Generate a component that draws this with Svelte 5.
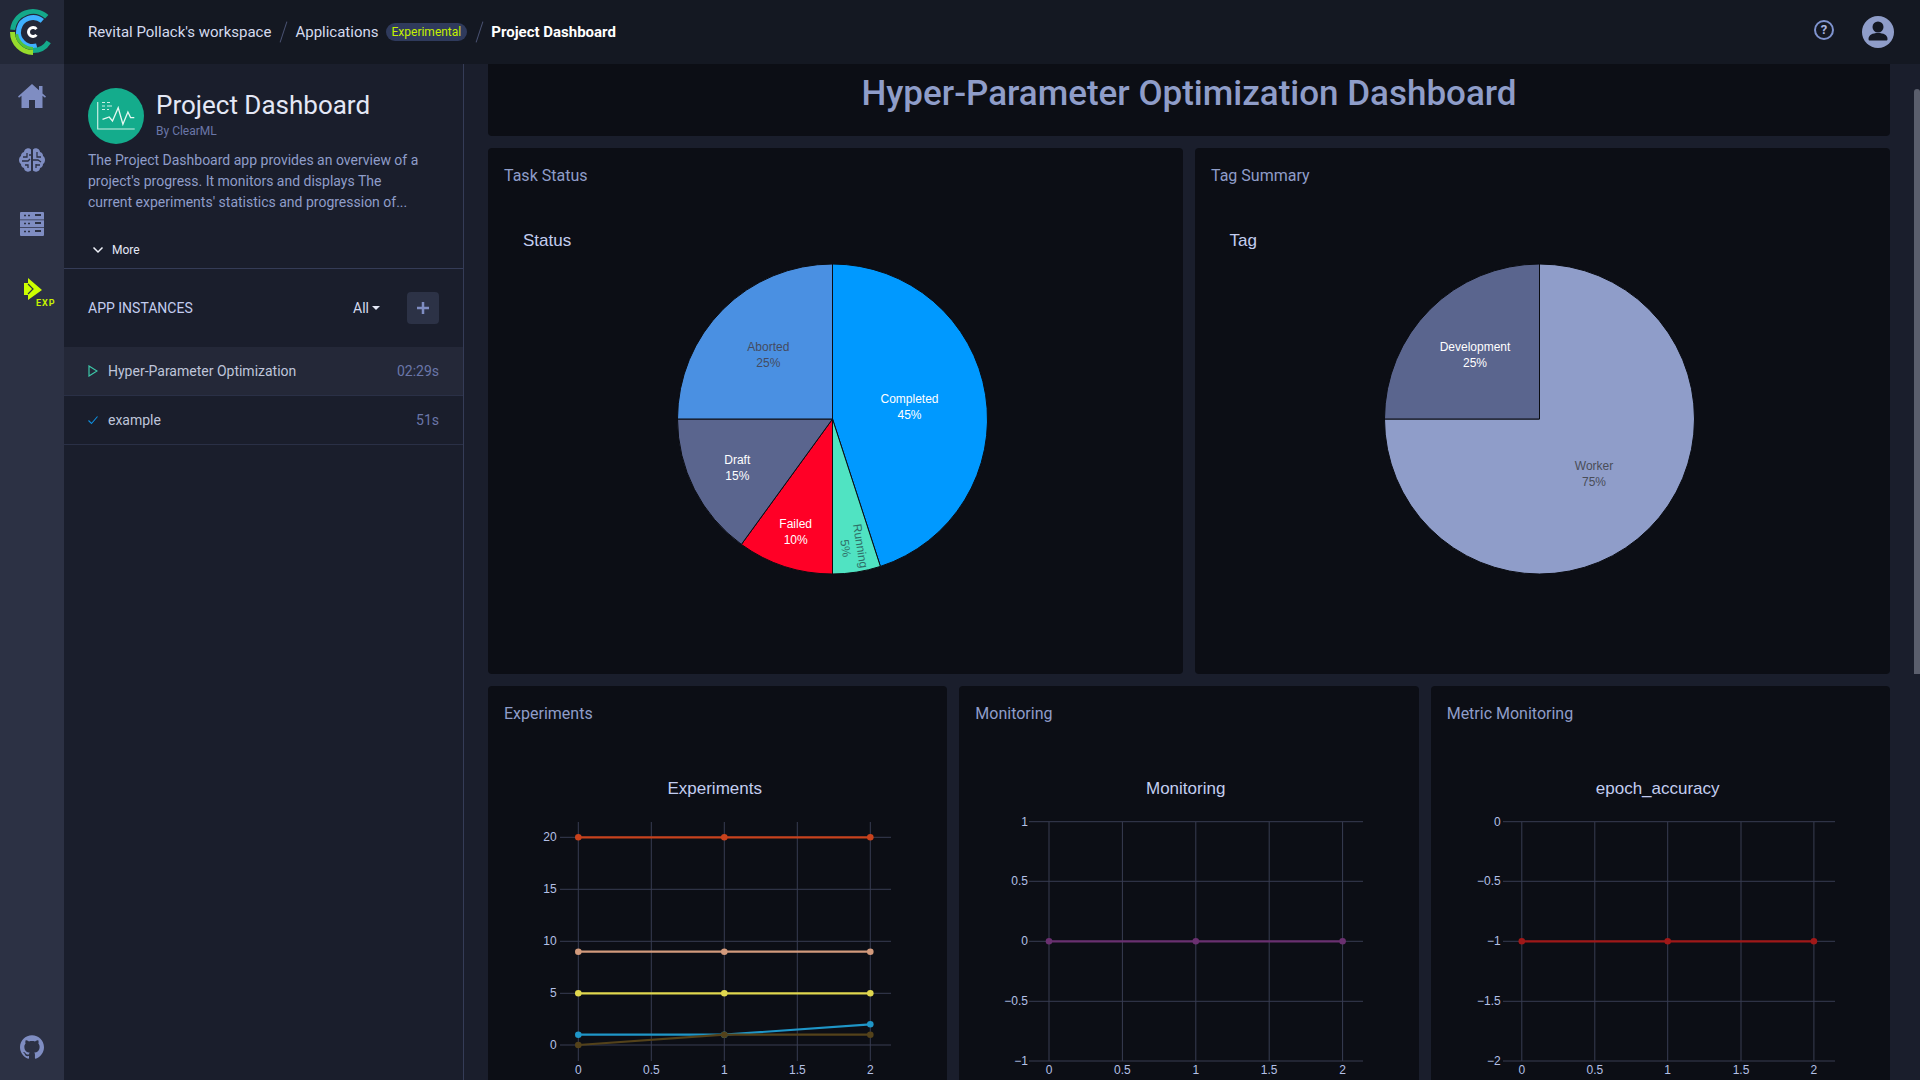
<script>
	// polar helpers, 0deg = 12 o'clock, clockwise
	function pt(cx, cy, r, a) {
		const t = (a * Math.PI) / 180;
		return [cx + r * Math.sin(t), cy - r * Math.cos(t)];
	}
	function arc(cx, cy, r, a0, a1) {
		const [x0, y0] = pt(cx, cy, r, a0);
		const [x1, y1] = pt(cx, cy, r, a1);
		return `M${x0} ${y0}A${r} ${r} 0 ${a1 - a0 > 180 ? 1 : 0} 1 ${x1} ${y1}`;
	}
	function wedge(cx, cy, r, a0, a1) {
		return `M${cx} ${cy}L${arc(cx, cy, r, a0, a1).slice(1)}Z`;
	}

	const cards = [
		{
			title: 'Task Status',
			chart: 'Status',
			chartX: 35,
			cx: 344.5,
			slices: [
				{ from: 0, to: 162, color: '#0099ff' },
				{ from: 162, to: 180, color: '#50e3c2' },
				{ from: 180, to: 216, color: '#ff0026' },
				{ from: 216, to: 270, color: '#5a658e' },
				{ from: 270, to: 360, color: '#4a90e2' }
			],
			labels: [
				{ x: 421.5, y: 201, name: 'Completed', pct: '45%', color: '#fff' },
				{ x: 280.3, y: 149, name: 'Aborted', pct: '25%', color: '#444b60' },
				{ x: 249.3, y: 261.5, name: 'Draft', pct: '15%', color: '#fff' },
				{ x: 307.7, y: 326, name: 'Failed', pct: '10%', color: '#fff' }
			],
			rotated: true
		},
		{
			title: 'Tag Summary',
			chart: 'Tag',
			chartX: 34.5,
			cx: 344.5,
			slices: [
				{ from: 0, to: 270, color: '#8f9dc9' },
				{ from: 270, to: 360, color: '#5a658e' }
			],
			labels: [
				{ x: 280, y: 149, name: 'Development', pct: '25%', color: '#fff' },
				{ x: 399, y: 268, name: 'Worker', pct: '75%', color: '#4a4d58' }
			],
			rotated: false
		}
	];

	const plots = [
		{
			title: 'Experiments',
			chart: 'Experiments',
			xs: [90.3, 163.3, 236.3, 309.3, 382.3],
			hFrom: 72,
			hTo: 403,
			labelEnd: 68.7,
			ticks: [
				['20', 97.3],
				['15', 149.3],
				['10', 201.3],
				['5', 253.3],
				['0', 305]
			],
			series: [
				{ color: '#c8421c', ys: [97.3, 97.3, 97.3] },
				{ color: '#d29a7c', ys: [211.7, 211.7, 211.7] },
				{ color: '#e0d74e', ys: [253.3, 253.3, 253.3] },
				{ color: '#1f96c8', ys: [294.7, 294.7, 284.3] },
				{ color: '#54421a', ys: [305, 294.7, 294.7] }
			]
		},
		{
			title: 'Monitoring',
			chart: 'Monitoring',
			xs: [90, 163.4, 236.8, 310.2, 383.6],
			hFrom: 70,
			hTo: 404,
			labelEnd: 69,
			ticks: [
				['1', 81.7],
				['0.5', 141.3],
				['0', 201.3],
				['−0.5', 261.3],
				['−1', 321]
			],
			series: [{ color: '#6a3070', ys: [201.3, 201.3, 201.3] }]
		},
		{
			title: 'Metric Monitoring',
			chart: 'epoch_accuracy',
			xs: [90.8, 163.8, 236.7, 310, 382.9],
			hFrom: 72,
			hTo: 404,
			labelEnd: 69.7,
			ticks: [
				['0', 81.7],
				['−0.5', 141.3],
				['−1', 201.3],
				['−1.5', 261.3],
				['−2', 321]
			],
			series: [{ color: '#a01818', ys: [201.3, 201.3, 201.3] }]
		}
	];
	const xLabels = ['0', '0.5', '1', '1.5', '2'];
</script>

<div class="app">
	<div class="logo">
		<svg width="64" height="64" viewBox="0 0 64 64" fill="none">
			<path d={arc(33, 32, 20.5, -84, 42)} stroke="#14a98a" stroke-width="5" />
			<path d={arc(33, 32, 14.5, 165, 400)} stroke="#3fb1ff" stroke-width="5" />
			<path d={arc(33, 32, 20.5, 180, 270)} stroke="#97dc2c" stroke-width="5" />
			<path d={arc(33, 32, 16.5, 180, 262)} stroke="#4fc23c" stroke-width="3" />
			<path d={arc(33, 32, 18.5, 122, 180)} stroke="#14a98a" stroke-width="5" />
			<path d={arc(33, 32, 4.5, 130, 410)} stroke="#fff" stroke-width="3" />
		</svg>
	</div>

	<header class="topbar">
		<nav class="crumbs">
			<span>Revital Pollack's workspace</span>
			<i class="slash"></i>
			<span>Applications</span>
			<span class="badge">Experimental</span>
			<i class="slash"></i>
			<span class="current">Project Dashboard</span>
		</nav>
		<div class="top-actions">
			<span class="help">?</span>
			<svg width="32" height="32" viewBox="0 0 32 32">
				<circle cx="16" cy="16" r="16" fill="#8f9dc9" />
				<circle cx="16" cy="11" r="5.5" fill="#141822" />
				<path d="M6.500 23c0-4 4-6 9.500-6s9.500 2 9.500 6c0 1-.5 1.500-1.500 1.500H8c-1 0-1.500-.5-1.500-1.500z" fill="#141822" />
			</svg>
		</div>
	</header>

	<aside class="rail">
		<svg class="rail-icon" style="margin-top:20px" width="28" height="24" viewBox="0 0 28 24">
			<path d="M14 0 21 6.300V2h3.500v7.400L28 12.500l-1 1.200-2.500-2V24h-7.500v-8h-6v8H3.500V11.700L1 13.700 0 12.500z" fill="#7f8dc2" />
		</svg>
		<svg class="rail-icon" style="margin-top:40px" width="26" height="24" viewBox="0 0 26 24">
			<path d="M12 1.500C11 .5 9.500 0 8 .5 6 1 5 2.500 5 4 3 4.500 2 6 2 8c-1.500 1-2 2.500-2 4s.5 3 2 4c0 2 1 3.500 3 4 0 1.500 1 3 3 3.500 1.500.5 3 0 4-1zM14 1.500c1-1 2.500-1.500 4-1 2 .5 3 2 3 3.500 2 .5 3 2 3 4 1.500 1 2 2.500 2 4s-.5 3-2 4c0 2-1 3.500-3 4 0 1.500-1 3-3 3.500-1.500.5-3 0-4-1z" fill="#7f8dc2" />
			<path d="M8 5v4H4M3 13h6l2-2M6 17h3v3M12 7H10M18 4v5h4M14 12h5l3 2M17 16v4M21 17h-4" fill="none" stroke="#2c3144" stroke-width="1.300" />
		</svg>
		<svg class="rail-icon" style="margin-top:40px" width="24" height="24" viewBox="0 0 24 24">
			<path d="M1 0h22a1 1 0 0 1 1 1v6.500H0V1a1 1 0 0 1 1-1zM0 8.300h24v7H0zM0 16.100h24V23a1 1 0 0 1-1 1H1a1 1 0 0 1-1-1z" fill="#7f8dc2" />
			<path d="M15 3h6M15 11h6M15 19h6" stroke="#2c3144" stroke-width="2" />
			<path d="M4 3.500h2M8 3.500h2M4 11.500h2M8 11.500h2M4 19.500h2M8 19.500h2" stroke="#2c3144" stroke-width="1.500" />
		</svg>
		<div class="exp">
			<svg width="18" height="22" viewBox="0 0 18 22">
				<path d="M0 5h4V0l14 12L4 22v-5H0z" fill="#ccff00" />
				<path d="M4 6l5 5-5 5" fill="none" stroke="#2c3144" stroke-width="1.200" />
			</svg>
			<span>EXP</span>
		</div>
		<svg class="github" width="24" height="24" viewBox="0 0 24 24">
			<path d="M12 .297c-6.630 0-12 5.373-12 12 0 5.303 3.438 9.800 8.205 11.385.6.113.82-.258.82-.577 0-.285-.01-1.040-.015-2.040-3.338.724-4.042-1.610-4.042-1.610C4.422 18.070 3.633 17.700 3.633 17.700c-1.087-.744.084-.729.084-.729 1.205.084 1.838 1.236 1.838 1.236 1.070 1.835 2.809 1.305 3.495.998.108-.776.417-1.305.76-1.605-2.665-.3-5.466-1.332-5.466-5.930 0-1.310.465-2.380 1.235-3.220-.135-.303-.54-1.523.105-3.176 0 0 1.005-.322 3.300 1.230.96-.267 1.980-.399 3-.405 1.020.006 2.040.138 3 .405 2.280-1.552 3.285-1.230 3.285-1.230.645 1.653.24 2.873.12 3.176.765.84 1.230 1.910 1.230 3.220 0 4.610-2.805 5.625-5.475 5.920.42.36.81 1.096.81 2.220 0 1.606-.015 2.896-.015 3.286 0 .315.21.69.825.57C20.565 22.092 24 17.592 24 12.297c0-6.627-5.373-12-12-12" fill="#7f8dc2" />
		</svg>
	</aside>

	<section class="panel">
		<div class="about">
			<div class="app-head">
				<svg width="56" height="56" viewBox="0 0 56 56" fill="none">
					<circle cx="28" cy="28" r="28" fill="#14ac8c" />
					<path d="M9.700 14v27h37" stroke="#c9efe4" stroke-width="1.200" />
					<path d="M14.500 31.300l6.700-2.300 3.300 4 5.700-13.300 4.700 16.600 5-12.300 2.700 5.600h3.700" stroke="#e6f8f2" stroke-width="1.300" />
					<path d="M14 14.500h3M19 14.500h3M14 18h3M19 18h5M14 21.500h3M19 21.500h2" stroke="#c9efe4" stroke-width="1.200" />
				</svg>
				<div>
					<h1>Project Dashboard</h1>
					<p class="by">By ClearML</p>
				</div>
			</div>
			<p class="desc">The Project Dashboard app provides an overview of a project's progress. It monitors and displays The current experiments' statistics and progression of...</p>
			<div class="more">
				<svg width="12" height="8" viewBox="0 0 12 8" fill="none"><path d="M1.500 1.500 6 6l4.500-4.500" stroke="#f0f2fa" stroke-width="1.500" /></svg>
				<span>More</span>
			</div>
		</div>
		<div class="instances-head">
			<span class="inst-title">APP INSTANCES</span>
			<span class="filter">All<i class="caret"></i></span>
			<button class="add" aria-label="Add">
				<svg width="12" height="12" viewBox="0 0 12 12"><path d="M6 0v12M0 6h12" stroke="#7f8dc2" stroke-width="2.500" /></svg>
			</button>
		</div>
		<div class="row active">
			<svg width="10" height="12" viewBox="0 0 10 12" fill="none"><path d="M1 1v10l8-5z" stroke="#3dc7a8" stroke-width="1.200" /></svg>
			<span class="row-name">Hyper-Parameter Optimization</span>
			<span class="row-time">02:29s</span>
		</div>
		<div class="row">
			<svg width="10" height="12" viewBox="0 0 10 12" fill="none"><path d="M.5 6.500 3.500 9.500 9.500 2.500" stroke="#0e8fe0" stroke-width="1.100" /></svg>
			<span class="row-name">example</span>
			<span class="row-time">51s</span>
		</div>
	</section>

	<main class="content">
		<div class="card banner"><h2>Hyper-Parameter Optimization Dashboard</h2></div>

		<div class="grid two">
			{#each cards as c}
				<div class="card chart-card tall">
					<h3>{c.title}</h3>
					<svg class="chart" width="695" height="471">
						<text class="plot-title" x={c.chartX} y="44">{c.chart}</text>
						{#each c.slices as s}
							<path d={wedge(c.cx, 217, 155, s.from, s.to)} fill={s.color} stroke="#0a0c12" stroke-width="1" />
						{/each}
						{#each c.labels as l}
							<text class="pie-label" x={l.x} y={l.y} fill={l.color}>{l.name}</text>
							<text class="pie-label" x={l.x} y={l.y + 16} fill={l.color}>{l.pct}</text>
						{/each}
						{#if c.rotated}
							<g transform="translate(365.5 345) rotate(81)">
								<text class="pie-label" x="0" y="-3" fill="#2f6f68">Running</text>
								<text class="pie-label" x="0" y="12" fill="#2f6f68">5%</text>
							</g>
						{/if}
					</svg>
				</div>
			{/each}
		</div>

		<div class="grid three">
			{#each plots as p}
				<div class="card chart-card">
					<h3>{p.title}</h3>
					<svg class="chart" width="459" height="360">
						<text class="plot-title center" x="226.700" y="54">{p.chart}</text>
						{#each p.xs as x, i}
							<line class="grid-line" x1={x} x2={x} y1="82" y2="321" />
							<text class="tick center" {x} y="334">{xLabels[i]}</text>
						{/each}
						{#each p.ticks as [label, y]}
							<line class="grid-line" x1={p.hFrom} x2={p.hTo} y1={y} y2={y} />
							<text class="tick end" x={p.labelEnd} y={y + 4}>{label}</text>
						{/each}
						{#each p.series as s}
							<polyline
								points={s.ys.map((y, i) => `${p.xs[i * 2]},${y}`).join(' ')}
								fill="none"
								stroke={s.color}
								stroke-width="2.200"
							/>
							{#each s.ys as y, i}
								<circle cx={p.xs[i * 2]} cy={y} r="3.300" fill={s.color} />
							{/each}
						{/each}
					</svg>
				</div>
			{/each}
		</div>
		<div class="scrollbar"></div>
	</main>
</div>

<style>
	:global(body) {
		margin: 0;
		background: #1a1e2c;
		font-family: Roboto, sans-serif;
	}

	.app {
		display: grid;
		grid-template-columns: 64px 400px 1fr;
		grid-template-rows: 64px 1fr;
		height: 100vh;
		overflow: hidden;
	}

	.logo {
		background: #232838;
	}
	.logo svg {
		display: block;
	}

	.topbar {
		grid-column: 2 / 4;
		display: flex;
		align-items: center;
		justify-content: space-between;
		background: #141822;
		padding: 0 26px 0 24px;
	}

	.crumbs {
		display: flex;
		align-items: center;
		font-size: 15px;
		color: #d5dbef;
	}
	.slash {
		width: 1px;
		height: 22px;
		margin: 0 11.500px;
		background: #4a5272;
		transform: rotate(18deg);
	}
	.badge {
		margin-left: 7px;
		padding: 0 6px;
		height: 18px;
		line-height: 18px;
		border-radius: 9px;
		background: #2f3a5c;
		color: #c6f000;
		font-size: 12px;
	}
	.current {
		font-weight: 700;
		font-size: 15px;
		color: #fff;
	}

	.top-actions {
		display: flex;
		align-items: center;
		gap: 28px;
	}
	.help {
		box-sizing: border-box;
		width: 20px;
		height: 20px;
		margin-top: -4px;
		border: 2px solid #7f93cf;
		border-radius: 50%;
		color: #a9b6e0;
		font-size: 13px;
		font-weight: 700;
		line-height: 16px;
		text-align: center;
	}

	.rail {
		display: flex;
		flex-direction: column;
		align-items: center;
		background: #2c3144;
	}
	.rail-icon {
		display: block;
		flex: none;
	}
	.exp {
		position: relative;
		width: 36px;
		height: 32px;
		margin-top: 42px;
		margin-left: 16px;
	}
	.exp svg {
		display: block;
		margin-left: 2px;
	}
	.exp span {
		position: absolute;
		left: 14px;
		top: 20px;
		font-size: 9px;
		font-weight: 700;
		letter-spacing: 1px;
		color: #c6f000;
		font-family: Roboto, sans-serif;
	}
	.github {
		margin-top: auto;
		margin-bottom: 21px;
	}

	.panel {
		box-sizing: border-box;
		border-right: 1px solid #353c57;
		background: #1a1e2c;
	}
	.about {
		height: 205px;
		box-sizing: border-box;
		padding: 24px 24px 0;
		border-bottom: 1px solid #353c57;
	}
	.app-head {
		display: flex;
		gap: 12px;
	}
	.app-head svg {
		display: block;
		flex: none;
	}
	h1 {
		margin: 0;
		padding-top: 1px;
		font-size: 26px;
		font-weight: 400;
		line-height: 33px;
		color: #e4e8f6;
	}
	.by {
		margin: 1px 0 0;
		font-size: 12px;
		line-height: 16px;
		color: #6a76a8;
	}
	.desc {
		max-width: 335px;
		margin: 6px 0 0;
		font-size: 14px;
		line-height: 21px;
		color: #8f9dc9;
	}
	.more {
		display: flex;
		align-items: center;
		gap: 8px;
		margin-top: 29px;
		padding-left: 4px;
		font-size: 12px;
		line-height: 16px;
		color: #e4e8f6;
	}

	.instances-head {
		display: flex;
		align-items: center;
		height: 78px;
		padding: 0 24px;
	}
	.inst-title {
		flex: 1;
		font-size: 14px;
		color: #c3cdf0;
	}
	.filter {
		display: flex;
		align-items: center;
		gap: 3px;
		margin-right: 27px;
		font-size: 14px;
		color: #d5dbef;
	}
	.caret {
		width: 0;
		height: 0;
		border: 4px solid transparent;
		border-top: 4px solid #e4e8f6;
		border-bottom: 0;
	}
	.add {
		display: flex;
		align-items: center;
		justify-content: center;
		width: 32px;
		height: 32px;
		padding: 0;
		border: 0;
		border-radius: 4px;
		background: #2c3246;
	}

	.row {
		display: flex;
		align-items: center;
		height: 49px;
		box-sizing: border-box;
		padding: 0 24px;
		border-bottom: 1px solid #2a3046;
		font-size: 14px;
	}
	.row.active {
		background: #242838;
	}
	.row svg {
		flex: none;
		margin-right: 10px;
	}
	.row-name {
		flex: 1;
		color: #bfc5da;
	}
	.row-time {
		color: #6a76a8;
	}

	.content {
		position: relative;
		min-width: 0;
		overflow: hidden;
		padding: 0 30px 0 24px;
	}

	.card {
		border-radius: 4px;
		background: #0c0e15;
	}
	.banner {
		height: 72px;
		border-radius: 0 0 4px 4px;
	}
	h2 {
		margin: 0;
		font-size: 35px;
		font-weight: 500;
		line-height: 59px;
		text-align: center;
		color: #8f9dc9;
	}

	.grid {
		display: grid;
		gap: 12px;
		margin-top: 12px;
	}
	.two {
		grid-template-columns: 1fr 1fr;
	}
	.three {
		grid-template-columns: 1fr 1fr 1fr;
	}

	.chart-card {
		overflow: hidden;
	}
	.tall {
		height: 526px;
	}
	h3 {
		margin: 0;
		height: 54px;
		box-sizing: border-box;
		padding: 18px 16px 0;
		font-size: 16px;
		font-weight: 400;
		line-height: 20px;
		color: #8f9dc9;
	}

	.chart {
		display: block;
		font-family: 'Liberation Sans', Arial, sans-serif;
	}
	.plot-title {
		font-size: 17px;
		fill: #c3cdf0;
	}
	.center {
		text-anchor: middle;
	}
	.end {
		text-anchor: end;
	}
	.pie-label {
		font-size: 12px;
		text-anchor: middle;
	}
	.tick {
		font-size: 12px;
		fill: #b4c0e6;
	}
	.grid-line {
		stroke: #383d52;
		stroke-width: 1;
	}

	.scrollbar {
		position: absolute;
		top: 25px;
		right: 0;
		width: 6px;
		height: 585px;
		border-radius: 3px 3px 0 0;
		background: #5a5e6c;
	}
</style>
